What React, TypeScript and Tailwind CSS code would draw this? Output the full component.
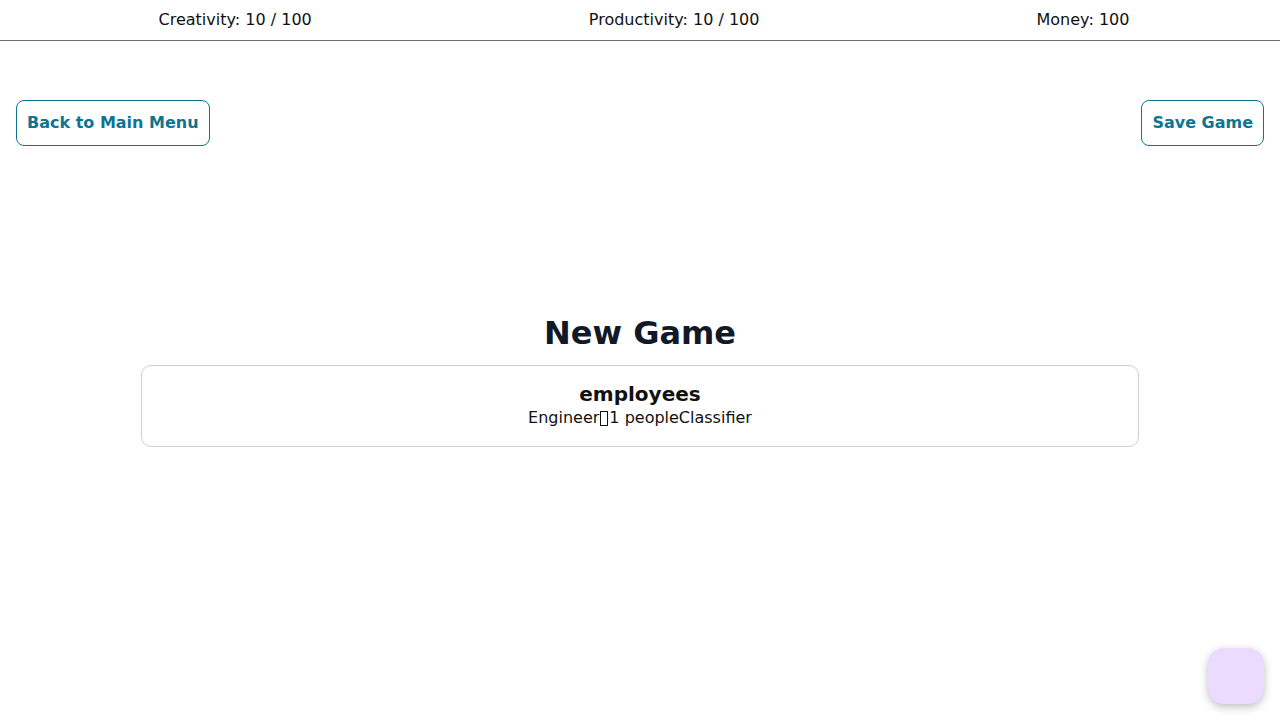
const stats = [
  { label: "Creativity", value: "10 / 100" },
  { label: "Productivity", value: "10 / 100" },
  { label: "Money", value: "100" },
]

export default function App() {
  return (
    <div className="min-h-screen bg-white text-[#111] font-['DejaVu_Sans',sans-serif]">
      <header className="flex justify-around pl-5 pr-3 h-[41px] items-center border-b border-[#6b6f73]">
        {stats.map((s) => (
          <span key={s.label} className="text-base">
            {s.label}: {s.value}
          </span>
        ))}
      </header>

      <div className="flex justify-between px-4 mt-[59px]">
        <button className="px-2.5 py-2.5 border border-[#0e7490] rounded-lg text-[#0e7490] font-bold text-base leading-6">
          Back to Main Menu
        </button>
        <button className="px-2.5 py-2.5 border border-[#0e7490] rounded-lg text-[#0e7490] font-bold text-base leading-6">
          Save Game
        </button>
      </div>

      <main className="flex flex-col items-center mt-[167px]">
        <h1 className="text-[32px] leading-10 font-bold text-[#111827]">New Game</h1>
        <div className="w-[998px] mt-3 border border-[#cfcfcf] rounded-[10px] pt-4 pb-4 flex flex-col items-center">
          <h2 className="text-xl leading-6 font-bold">employees</h2>
          <p className="text-base leading-6">
            Engineer
            <span className="inline-block w-[8px] h-[15px] border border-[#111] align-[-3px] ml-px mr-px"></span>
            1 peopleClassifier
          </p>
        </div>
      </main>

      <button className="fixed right-4 bottom-4 w-14 h-14 rounded-2xl bg-[#ebdcff] shadow-[0_3px_8px_rgba(0,0,0,0.25)]"></button>
    </div>
  )
}
